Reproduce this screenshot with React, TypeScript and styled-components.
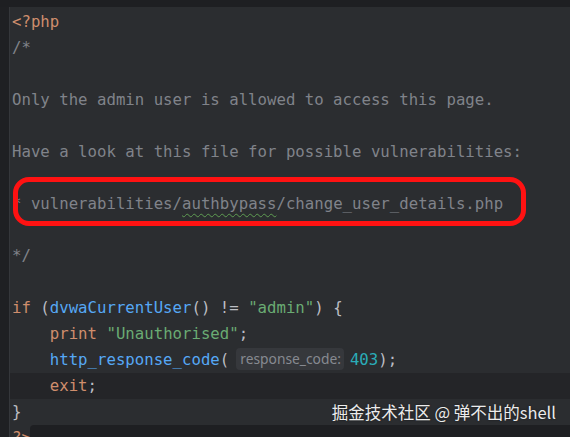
import React from 'react';
import styled, { createGlobalStyle } from 'styled-components';

const GlobalStyle = createGlobalStyle`
  html, body {
    margin: 0;
    padding: 0;
    background: #2b2d30;
    overflow: hidden;
  }
`;

const EditorContainer = styled.main`
  width: 570px;
  height: 437px;
  background: #2b2d30;
  display: flex;
  flex-direction: column;
  overflow: hidden;
  position: relative;
  font-family: 'DejaVu Sans Mono', 'Liberation Mono', monospace;
  font-size: 15.7px;
  color: #bcbec4;
`;

const TopBar = styled.header`
  height: 7px;
  flex-shrink: 0;
  background: #1e1f22;
`;

const EditorBody = styled.section`
  flex: 1;
  display: flex;
  flex-direction: row;
  min-height: 0;
  position: relative;
`;

const Gutter = styled.aside`
  width: 9px;
  flex-shrink: 0;
  background: #1f2023;
  border-right: 1px solid #35373b;
`;

const CodeColumn = styled.div`
  flex: 1;
  padding-top: 2px;
  position: relative;
`;

const Line = styled.div<{ $current?: boolean }>`
  height: 26px;
  line-height: 26px;
  padding-left: 2px;
  white-space: pre;
  background: ${(props) => (props.$current ? '#242528' : 'transparent')};
`;

const Keyword = styled.span`
  color: #cf8e6d;
`;

const Comment = styled.span`
  color: #80838a;
`;

const Func = styled.span`
  color: #56a8f5;
`;

const Str = styled.span`
  color: #6aab73;
`;

const Num = styled.span`
  color: #2aacb8;
`;

const Typo = styled.span`
  text-decoration: underline wavy #5e9c52;
  text-decoration-thickness: 1px;
  text-underline-offset: 4px;
`;

const InlayHint = styled.span`
  display: inline-block;
  height: 22px;
  line-height: 22px;
  vertical-align: middle;
  margin: -3px 6px 0 7px;
  padding: 0 3px 0 4px;
  border-radius: 4px;
  background: #36383c;
  color: #878a91;
  font-family: 'Noto Sans', 'Open Sans', sans-serif;
  font-size: 13.8px;
`;

const Annotation = styled.div`
  position: absolute;
  left: 3px;
  top: 170px;
  width: 503px;
  height: 39px;
  border: 5px solid #ff1212;
  border-radius: 16px;
  pointer-events: none;
`;

const Watermark = styled.div`
  position: absolute;
  right: 14px;
  bottom: 13px;
  color: #ececec;
  font-family: 'Noto Sans CJK SC', 'Noto Sans', sans-serif;
  font-size: 16.5px;
  text-shadow: 0 0 2px rgba(0, 0, 0, 0.5);
  white-space: nowrap;
`;

const BottomPanel = styled.div`
  position: absolute;
  left: 30px;
  right: 0;
  bottom: 0;
  height: 12px;
  background: #1e1f22;
  border-top-left-radius: 4px;
`;

export default function App() {
  return (
    <>
      <GlobalStyle />
      <EditorContainer>
        <TopBar />
        <EditorBody>
          <Gutter />
          <CodeColumn>
            <Line>
              <Keyword>&lt;?php</Keyword>
            </Line>
            <Line>
              <Comment>/*</Comment>
            </Line>
            <Line />
            <Line>
              <Comment>Only the admin user is allowed to access this page.</Comment>
            </Line>
            <Line />
            <Line>
              <Comment>Have a look at this file for possible vulnerabilities:</Comment>
            </Line>
            <Line />
            <Line>
              <Comment>
                * vulnerabilities/<Typo>authbypass</Typo>/change_user_details.php
              </Comment>
            </Line>
            <Line />
            <Line>
              <Comment>*/</Comment>
            </Line>
            <Line />
            <Line>
              <Keyword>if</Keyword> (<Func>dvwaCurrentUser</Func>() != <Str>"admin"</Str>) {'{'}
            </Line>
            <Line>
              {'    '}
              <Keyword>print</Keyword> <Str>"Unauthorised"</Str>;
            </Line>
            <Line>
              {'    '}
              <Func>http_response_code</Func>(
              <InlayHint>response_code:</InlayHint>
              <Num>403</Num>);
            </Line>
            <Line $current>
              {'    '}
              <Keyword>exit</Keyword>;
            </Line>
            <Line>{'}'}</Line>
            <Line>
              <Keyword>?&gt;</Keyword>
            </Line>
            <Annotation />
          </CodeColumn>
          <Watermark>掘金技术社区 @ 弹不出的shell</Watermark>
          <BottomPanel />
        </EditorBody>
      </EditorContainer>
    </>
  );
}
